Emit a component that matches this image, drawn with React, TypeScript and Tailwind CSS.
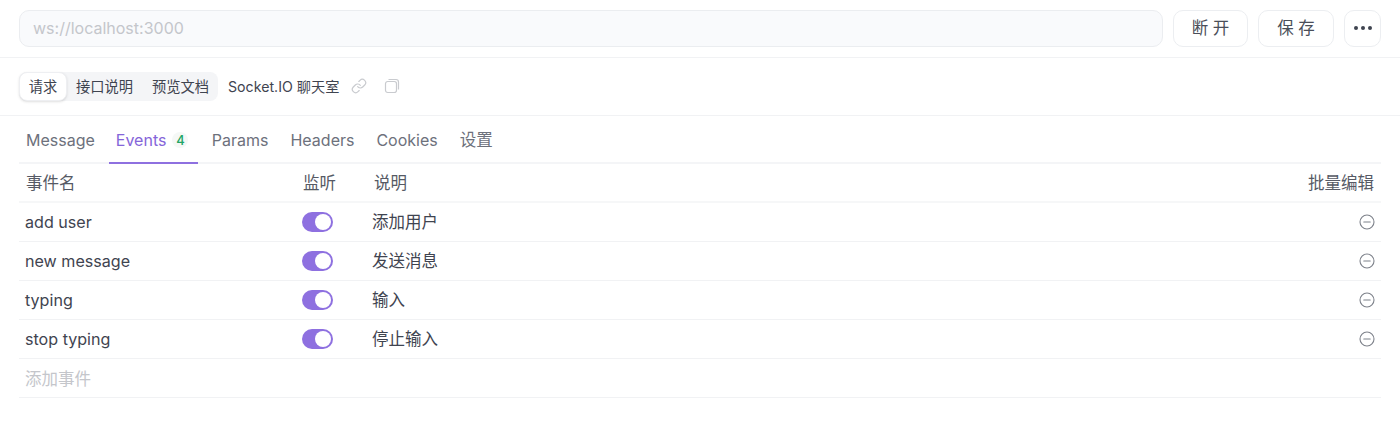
import React from "react";

function Toggle() {
  return (
    <span className="flex h-[20px] w-[31px] items-center justify-end rounded-full bg-[#8e70e0] pr-[2px]">
      <span className="h-[16px] w-[16px] rounded-full bg-white" />
    </span>
  );
}

function Minus() {
  return (
    <svg width="16" height="16" viewBox="0 0 16 16" fill="none" stroke="#7d818a" strokeWidth="1.1" strokeLinecap="round">
      <circle cx="8" cy="8" r="7" />
      <path d="M4.8 8h6.4" />
    </svg>
  );
}

const rows = [
  ["add user", "添加用户"],
  ["new message", "发送消息"],
  ["typing", "输入"],
  ["stop typing", "停止输入"],
];

export default function App() {
  return (
    <div className="h-[422px] w-[1400px] overflow-hidden bg-white font-['Inter','Noto_Sans_CJK_SC',sans-serif] text-[#3f4450]">
      <div className="flex h-[58px] items-center gap-[10px] border-b border-[#f1f2f4] pb-[1px] pl-[19px] pr-[19px]">
        <div className="flex h-[37px] flex-1 items-center rounded-[10px] border border-[#ebedf0] bg-[#f9fafc] pl-[13px] text-[16px] text-[#c4c6cb]">
          ws://localhost:3000
        </div>
        <button className="h-[37px] w-[75px] rounded-[10px] border border-[#eceef1] bg-white text-[16.5px] text-[#4a4e59]">断 开</button>
        <button className="h-[37px] w-[76px] rounded-[10px] border border-[#eceef1] bg-white text-[16.5px] text-[#4a4e59]">保 存</button>
        <button className="flex h-[37px] w-[37px] items-center justify-center gap-[3px] rounded-[10px] border border-[#eceef1] bg-white">
          <span className="h-[4px] w-[4px] rounded-full bg-[#3f4450]" />
          <span className="h-[4px] w-[4px] rounded-full bg-[#3f4450]" />
          <span className="h-[4px] w-[4px] rounded-full bg-[#3f4450]" />
        </button>
      </div>

      <div className="flex h-[58px] items-center border-b border-[#f1f2f4] pb-[1px] pl-[19px]">
        <div className="flex h-[29px] w-[199px] items-center rounded-[8px] bg-[#f4f5f7] text-[14.25px] text-[#3f4450]">
          <span className="flex h-[29px] w-[48px] items-center justify-center rounded-[8px] border border-[#eeeff2] bg-white pt-[1px] shadow-sm">请求</span>
          <span className="ml-[9px] pt-[1px]">接口说明</span>
          <span className="ml-[19px] pt-[1px]">预览文档</span>
        </div>
        <span className="ml-[10px] pt-[1px] text-[14.2px] text-[#3f4450]">Socket.IO 聊天室</span>
        <svg className="ml-[12px]" width="16" height="16" viewBox="0 0 24 24" fill="none" stroke="#c9cbcf" strokeWidth="1.8" strokeLinecap="round" strokeLinejoin="round">
          <path d="M10 13a5 5 0 0 0 7.54.54l3-3a5 5 0 0 0-7.07-7.07l-1.72 1.71" />
          <path d="M14 11a5 5 0 0 0-7.54-.54l-3 3a5 5 0 0 0 7.07 7.07l1.71-1.71" />
        </svg>
        <svg className="ml-[17px]" width="16" height="16" viewBox="0 0 16 16" fill="none" stroke="#c9cbcf" strokeWidth="1.2">
          <rect x="1.5" y="3.5" width="11" height="11" rx="2.2" />
          <path d="M4.5 1.5h7.5a2.5 2.5 0 0 1 2.5 2.5v7.5" />
        </svg>
      </div>

      <div className="mx-[19px] flex h-[48px] items-stretch border-b-2 border-[#f4f5f7] pt-[2px] text-[16px] text-[#6d717c]">
        <span className="flex items-center px-[7px]">Message</span>
        <span className="relative ml-[7px] flex w-[89px] items-center pl-[7px] text-[#8565d9]">
          Events
          <span className="ml-[6px] flex h-[16px] w-[16px] items-center justify-center rounded-full bg-[#f5f8f6] pt-[1px] text-[13px] font-medium text-[#22a565]">4</span>
          <span className="absolute -bottom-[2px] left-0 h-[2px] w-full bg-[#8e70e0]" />
        </span>
        <span className="ml-[7px] flex items-center px-[7px]">Params</span>
        <span className="ml-[8px] flex items-center px-[7px]">Headers</span>
        <span className="ml-[8px] flex items-center px-[7px]">Cookies</span>
        <span className="ml-[8px] flex items-center px-[7px] text-[16.5px]">设置</span>
      </div>

      <div className="mx-[19px] flex h-[39px] items-center border-b-2 border-[#f6f7f8] pt-[2px] text-[16.5px] text-[#565a65]">
        <span className="w-[284px] pl-[7px]">事件名</span>
        <span className="w-[71px]">监听</span>
        <span className="flex-1">说明</span>
        <span className="pr-[7px]">批量编辑</span>
      </div>

      {rows.map(([name, desc]) => (
        <div key={name} className="mx-[19px] flex h-[39px] items-center border-b border-[#f1f2f4] text-[16.1px] text-[#3f4450]">
          <span className="w-[283px] pl-[6px]">{name}</span>
          <span className="w-[70px]"><Toggle /></span>
          <span className="flex-1 text-[16.5px]">{desc}</span>
          <span className="pr-[6px]"><Minus /></span>
        </div>
      ))}

      <div className="mx-[19px] flex h-[39px] items-center border-b border-[#f1f2f4] pl-[6px] pt-[2px] text-[16.5px] text-[#c4c6cb]">添加事件</div>
    </div>
  );
}
